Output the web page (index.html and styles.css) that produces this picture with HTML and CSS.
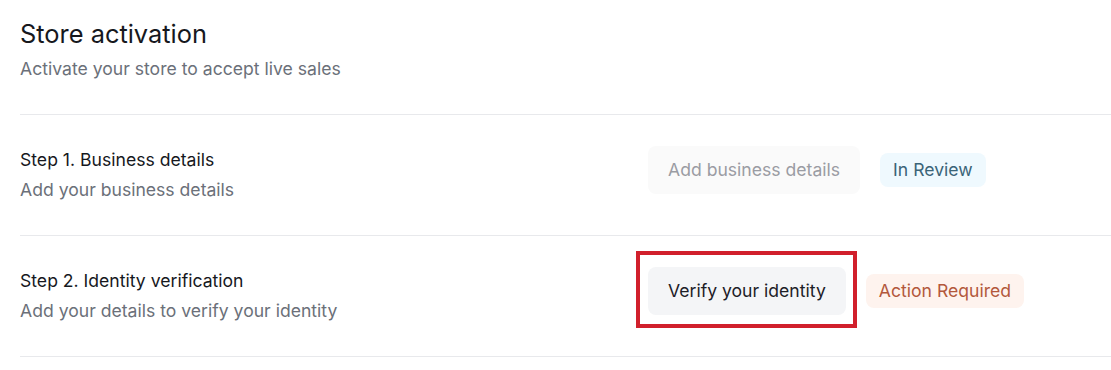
FILE: index.html
```html
<!DOCTYPE html>
<html lang="en">
<head>
<meta charset="utf-8">
<title>Store activation</title>
<link rel="stylesheet" href="styles.css">
</head>
<body>
<main class="page">
  <header class="header">
    <h1 class="title">Store activation</h1>
    <p class="subtitle">Activate your store to accept live sales</p>
  </header>
  <section class="step">
    <div class="step-text">
      <h2 class="step-title">Step 1. Business details</h2>
      <p class="step-sub">Add your business details</p>
    </div>
    <div class="step-actions">
      <button class="btn btn-disabled" type="button">Add business details</button>
      <span class="badge badge-review">In Review</span>
    </div>
  </section>
  <section class="step">
    <div class="step-text">
      <h2 class="step-title">Step 2. Identity verification</h2>
      <p class="step-sub">Add your details to verify your identity</p>
    </div>
    <div class="step-actions">
      <div class="btn-wrap">
        <button class="btn btn-primary" type="button">Verify your identity</button>
        <span class="highlight"></span>
      </div>
      <span class="badge badge-action">Action Required</span>
    </div>
  </section>
</main>
</body>
</html>
```

FILE: styles.css
```css
* { box-sizing: border-box; }
html, body { margin: 0; padding: 0; background: #ffffff; }
body {
  font-family: Inter, "Noto Sans", "Liberation Sans", sans-serif;
  color: #111827;
  overflow: hidden;
}
.page {
  padding: 18px 0 0 20px;
}
.header {
  padding-bottom: 33px;
  border-bottom: 1px solid #e8e9ec;
}
.title {
  margin: 0;
  font-size: 25.4px;
  line-height: 32px;
  font-weight: 400;
  color: #16181d;
}
.subtitle {
  margin: 7px 0 0;
  font-size: 17.6px;
  line-height: 24px;
  color: #6b7079;
}
.step {
  display: grid;
  grid-template-columns: 628px auto;
  align-items: start;
  padding: 33px 0 33px;
  border-bottom: 1px solid #e8e9ec;
}
.step-title {
  margin: 0;
  font-size: 17.6px;
  line-height: 24px;
  font-weight: 400;
  color: #16181d;
}
.step-sub {
  margin: 6px 0 0;
  font-size: 17.6px;
  line-height: 24px;
  color: #6b7079;
}
.step-actions {
  display: flex;
  align-items: center;
  gap: 20px;
  margin-top: -2px;
}
.btn {
  font-family: inherit;
  font-size: 17.6px;
  line-height: 20px;
  padding: 14px 20px;
  border: 0;
  border-radius: 8px;
}
.btn-disabled {
  background: #fafafa;
  color: #9a9ca3;
}
.btn-primary {
  background: #f4f5f7;
  color: #1d2027;
}
.btn-wrap {
  position: relative;
  display: flex;
}
.highlight {
  position: absolute;
  left: -12px;
  top: -16px;
  right: -11px;
  bottom: -13px;
  border: 4px solid #d1202c;
  pointer-events: none;
}
.badge {
  font-size: 17.6px;
  line-height: 20px;
  padding: 7px 13px;
  border-radius: 8px;
}
.badge-review {
  background: #eff9fe;
  color: #3b6478;
}
.badge-action {
  background: #fef3ee;
  color: #b3583c;
}
```
